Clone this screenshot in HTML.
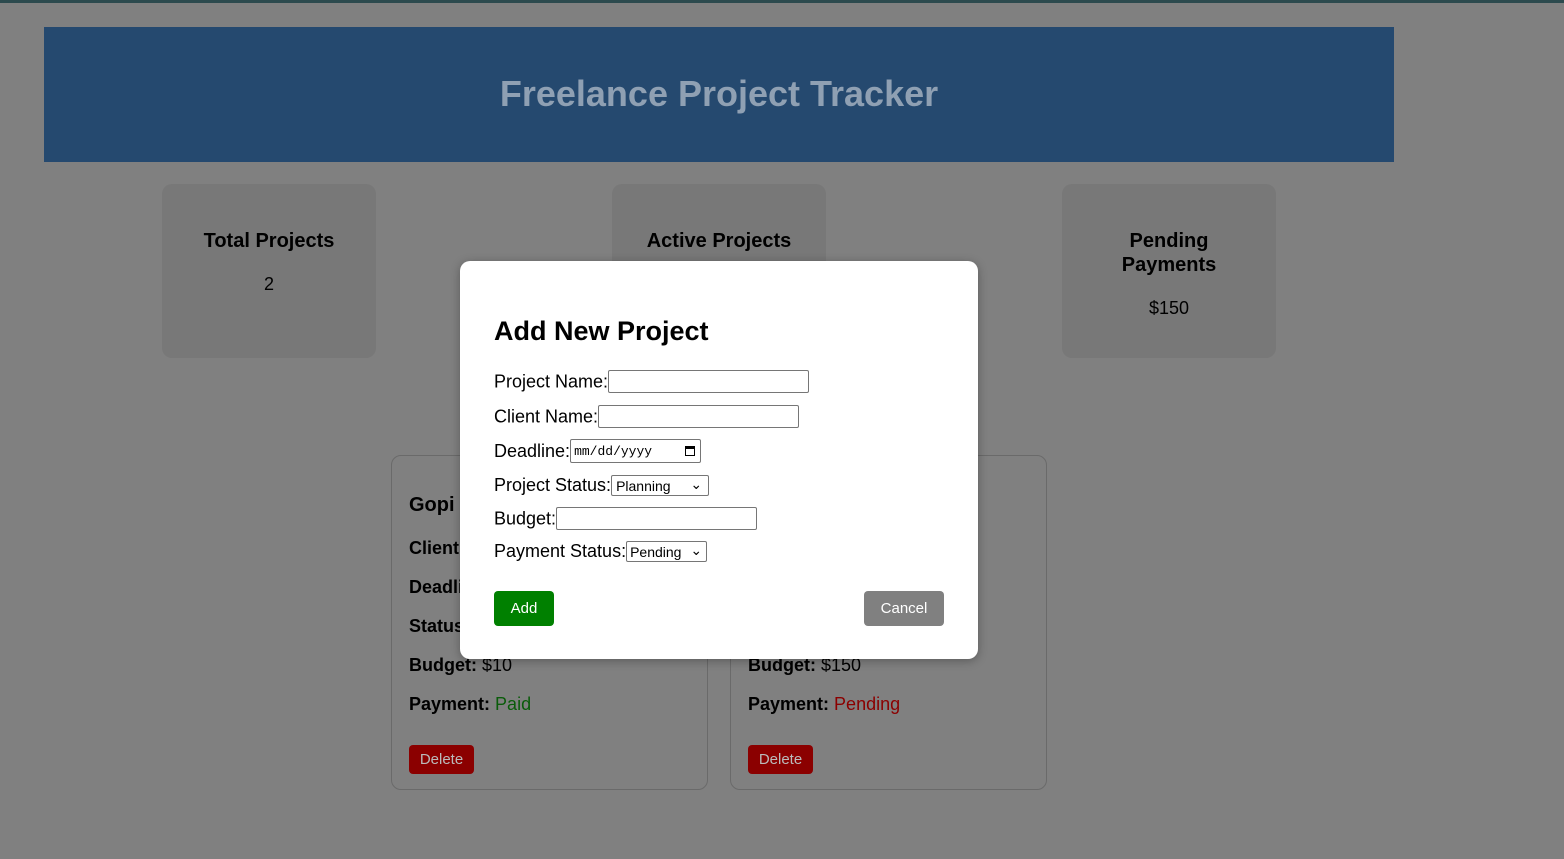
<!DOCTYPE html>
<html><head><style>
body{margin:0;width:1564px;height:859px;background:#808080;font-family:"Liberation Sans",Arial,sans-serif;position:relative;overflow:hidden}
.top{position:absolute;left:0;top:0;width:1564px;height:3px;background:#2c4a4e}
.hdr{position:absolute;left:44px;top:27px;width:1350px;height:135px;background:#25496f}
.hdr h1{margin:0;text-align:center;line-height:134px;font-size:36px;color:#8fa0b3;font-weight:bold}
.stat{position:absolute;top:184px;width:214px;height:174px;background:#787878;border-radius:10px;text-align:center}
.stat h3{margin:45px 0 0;font-size:20px;line-height:24px}
.stat p{margin:21px 0 0;font-size:18px}
.pc{position:absolute;top:455px;width:315px;height:333px;border:1px solid #6a6a6a;border-radius:10px;background:#808080}
.pc .r{position:absolute;left:17px;font-size:18px;color:#000}
.del{position:absolute;left:17px;top:289px;width:65px;height:29px;background:#8b0000;border-radius:4px;color:#bbb;font-size:15px;text-align:center;line-height:29px}
.modal{position:absolute;left:460px;top:261px;width:518px;height:398px;background:#fff;border-radius:10px;box-shadow:0 2px 10px rgba(0,0,0,.3)}
.modal h2{position:absolute;left:34px;top:55px;margin:0;font-size:27px;font-weight:bold}
.lab{position:absolute;left:34px;font-size:18px;color:#000;white-space:nowrap}
.inp{display:inline-block;vertical-align:middle;border:1px solid #767676;height:21px;box-sizing:border-box;border-radius:2px;background:#fff;font-size:13px;position:relative;top:-1px}
.btn{position:absolute;top:330px;height:35px;border-radius:4px;color:#fff;font-size:15px;text-align:center;line-height:36px}
</style></head><body>
<div class="top"></div>
<div class="hdr"><h1>Freelance Project Tracker</h1></div>
<div class="stat" style="left:162px"><h3>Total Projects</h3><p>2</p></div>
<div class="stat" style="left:612px"><h3>Active Projects</h3><p>1</p></div>
<div class="stat" style="left:1062px"><h3>Pending<br>Payments</h3><p>$150</p></div>
<div class="pc" style="left:391px">
<div class="r" style="top:38px;font-size:20px;font-weight:bold">Gopi</div>
<div class="r" style="top:82px"><b>Client:</b></div>
<div class="r" style="top:121px"><b>Deadline:</b></div>
<div class="r" style="top:160px"><b>Status:</b></div>
<div class="r" style="top:199px"><b>Budget:</b> $10</div>
<div class="r" style="top:238px"><b>Payment:</b> <span style="color:#0a5c0a">Paid</span></div>
<div class="del">Delete</div></div>
<div class="pc" style="left:730px">
<div class="r" style="top:199px"><b>Budget:</b> $150</div>
<div class="r" style="top:238px"><b>Payment:</b> <span style="color:#8b0000">Pending</span></div>
<div class="del">Delete</div></div>
<div class="modal">
<h2>Add New Project</h2>
<div class="lab" style="top:110px">Project Name:<span class="inp" style="width:201px;height:23px"></span></div>
<div class="lab" style="top:145px">Client Name:<span class="inp" style="width:201px;height:23px"></span></div>
<div class="lab" style="top:179px">Deadline:<span class="inp" style="width:131px;height:24px;font-family:'Liberation Mono',monospace;font-size:13px;line-height:24px;padding-left:3px">mm/dd/yyyy <span style="position:absolute;right:5px;top:6px;width:10px;height:10px;border:1.5px solid #000;border-top-width:3px;box-sizing:border-box"></span></span></div>
<div class="lab" style="top:214px">Project Status:<span class="inp" style="width:98px;height:21px;line-height:21px;padding-left:4px;font-size:14px">Planning<span style="position:absolute;right:6px;top:-2px">&#8964;</span></span></div>
<div class="lab" style="top:247px">Budget:<span class="inp" style="width:201px;height:23px"></span></div>
<div class="lab" style="top:280px">Payment Status:<span class="inp" style="width:81px;height:21px;line-height:21px;padding-left:3px;font-size:14px">Pending<span style="position:absolute;right:4px;top:-2px">&#8964;</span></span></div>
<div class="btn" style="left:34px;width:60px;background:#008000">Add</div>
<div class="btn" style="left:404px;width:80px;background:#808080">Cancel</div>
</div>
</body></html>
